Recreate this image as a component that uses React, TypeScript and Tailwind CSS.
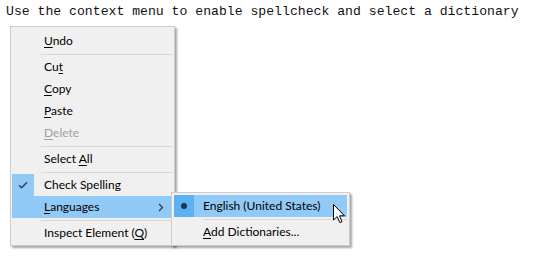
import React from "react";

const U = ({ children }: { children: React.ReactNode }) => (
  <span className="underline underline-offset-[2px] decoration-[1px]">{children}</span>
);

const Sep = () => (
  <div className="h-[4px] flex items-center pl-[29px]">
    <div className="h-px w-full bg-[#d7d7d7]" />
  </div>
);

type RowProps = {
  children: React.ReactNode;
  highlight?: boolean;
  disabled?: boolean;
  check?: boolean;
  arrow?: boolean;
};

const Row = ({ children, highlight, disabled, check, arrow }: RowProps) => (
  <div
    className={`h-[22px] flex items-center ${highlight ? "bg-[#91c9f7]" : ""} ${
      disabled ? "text-[#a0a0a0]" : "text-[#000]"
    }`}
  >
    <div
      className={`w-[22px] h-full flex items-center justify-center ${
        check ? "bg-[#91c9f7]" : ""
      }`}
    >
      {check && (
        <svg width="10" height="8" viewBox="0 0 10 8">
          <path d="M1 4.2 L3.6 6.8 L9 1.2" fill="none" stroke="#2b3a4a" strokeWidth="1.3" />
        </svg>
      )}
    </div>
    <div className="flex-1 pl-[10px]">{children}</div>
    {arrow && (
      <svg width="6" height="9" viewBox="0 0 6 9" className="mr-[9px]">
        <path d="M1 1 L4.5 4.5 L1 8" fill="none" stroke="#333" strokeWidth="1.1" />
      </svg>
    )}
  </div>
);

export default function App() {
  return (
    <div
      className="relative w-[533px] h-[257px] bg-white overflow-hidden"
      style={{ fontFamily: "Lato, 'Noto Sans', sans-serif" }}
    >
      <div
        className="pl-[6px] pt-[4px] text-[13.15px] leading-[16px] text-[#111]"
        style={{ fontFamily: "'Liberation Mono', monospace" }}
      >
        Use the context menu to enable spellcheck and select a dictionary
      </div>

      <div className="absolute left-[10px] top-[26px] w-[165px] bg-[#f0f0f0] border border-[#cccccc] pt-[3px] pb-px px-px shadow-[2px_2px_2px_rgba(0,0,0,0.35)] text-[12px]">
        <Row>
          <U>U</U>ndo
        </Row>
        <Sep />
        <Row>
          Cu<U>t</U>
        </Row>
        <Row>
          <U>C</U>opy
        </Row>
        <Row>
          <U>P</U>aste
        </Row>
        <Row disabled>
          <U>D</U>elete
        </Row>
        <Sep />
        <Row>
          Select <U>A</U>ll
        </Row>
        <Sep />
        <Row check>Check Spelling</Row>
        <Row highlight arrow>
          <U>L</U>anguages
        </Row>
        <Sep />
        <Row>
          Inspect Element (<U>Q</U>)
        </Row>
      </div>

      <div className="absolute left-[171px] top-[192px] w-[179px] bg-[#f0f0f0] border border-[#cccccc] py-[2px] px-[2px] shadow-[2px_2px_2px_rgba(0,0,0,0.35)] text-[12px]">
        <div className="h-[22px] flex items-center bg-[#91c9f7]">
          <div className="w-[20px] h-full bg-[#5cb1f2] flex items-center justify-center">
            <div className="w-[6px] h-[6px] rounded-full bg-[#1d3447]" />
          </div>
          <div className="pl-[9px]">English (United States)</div>
        </div>
        <Sep />
        <div className="h-[22px] flex items-center">
          <div className="w-[20px]" />
          <div className="pl-[9px]">
            <U>A</U>dd Dictionaries...
          </div>
        </div>
      </div>

      <svg
        className="absolute left-[333px] top-[204px]"
        width="13"
        height="20"
        viewBox="0 0 13 20"
      >
        <path
          d="M0.5 0.5 L0.5 16 L4.2 12.6 L6.8 18.6 L9 17.6 L6.5 11.8 L11.5 11.8 Z"
          fill="#fff"
          stroke="#000"
          strokeWidth="1"
          strokeLinejoin="miter"
        />
      </svg>
    </div>
  );
}
